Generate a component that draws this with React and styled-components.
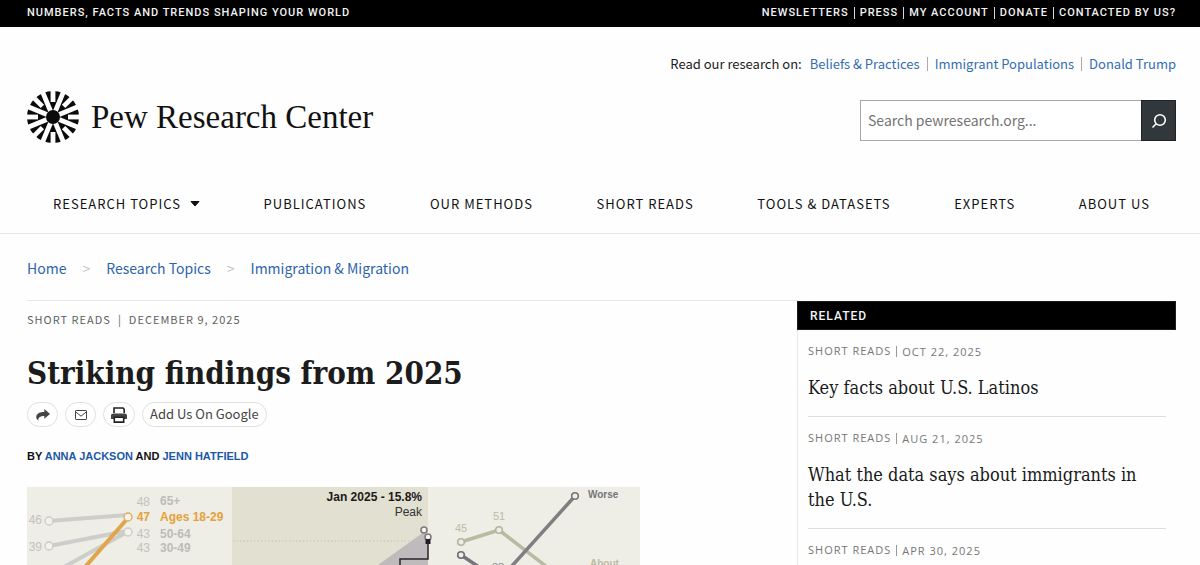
import React from "react";
import styled, { createGlobalStyle } from "styled-components";

const sans = `"Noto Sans CJK JP", "Noto Sans", sans-serif`;
const label = `Roboto, "Liberation Sans", sans-serif`;
const grotesk = `"Liberation Sans", sans-serif`;
const serif = `"Liberation Serif", serif`;
const slab = `"DejaVu Serif Condensed", "DejaVu Serif", serif`;

const GlobalStyle = createGlobalStyle`
  * {
    box-sizing: border-box;
  }

  body {
    margin: 0;
    background: #fefefe;
    color: #1a1a1a;
    font-family: ${sans};
    font-size: 14px;
    line-height: 20px;
  }

  a {
    color: inherit;
    text-decoration: none;
  }

  ul, ol {
    margin: 0;
    padding: 0;
    list-style: none;
  }
`;

const TopBar = styled.div`
  display: flex;
  justify-content: space-between;
  padding: 1px 24px 2px 27px;
  background: #000;
  color: #f2f2f2;
  font: 500 11px/24px ${label};
  letter-spacing: 1px;
  text-transform: uppercase;
`;

const TopLinks = styled.ul`
  display: flex;
  align-items: center;

  li + li {
    margin-left: 5px;
    padding-left: 5px;
    border-left: 1px solid #d8d8d8;
    line-height: 12px;
  }
`;

const Masthead = styled.header`
  border-bottom: 1px solid #e6e6e6;
`;

const MastheadRow = styled.div`
  display: flex;
  justify-content: space-between;
  align-items: flex-start;
  padding: 27px 24px 0 27px;
`;

const Brand = styled.a`
  display: flex;
  align-items: center;
  gap: 12px;
  margin-top: 37px;
  color: #111;
  font: 33px/52px ${serif};
`;

const MastheadSide = styled.div`
  display: flex;
  flex-direction: column;
  align-items: flex-end;
  gap: 26px;
`;

const ResearchOn = styled.div`
  display: flex;
  font-size: 13px;
`;

const ResearchLinks = styled.ul`
  display: flex;
  align-items: center;
  margin-left: 8px;
  color: #346db3;

  li + li {
    margin-left: 7px;
    padding-left: 7px;
    border-left: 1px solid #aaa;
    line-height: 14px;
  }
`;

const SearchForm = styled.form`
  display: flex;
  width: 316px;
  height: 41px;
`;

const SearchInput = styled.input`
  flex: 1;
  min-width: 0;
  padding: 0 7px 2px;
  border: 1px solid #a8a8a8;
  border-right: 0;
  border-radius: 0;
  background: #fff;
  font: 14px/20px ${sans};

  &::placeholder {
    color: #737373;
    opacity: 1;
  }
`;

const SearchButton = styled.button`
  display: flex;
  align-items: center;
  justify-content: center;
  width: 35px;
  padding: 0;
  border: 1px solid #1f2327;
  background: #32373c;
  color: #fff;
`;

const MainNav = styled.nav`
  padding: 51px 50px 19px 53px;

  ul {
    display: flex;
    justify-content: space-between;
  }

  a {
    display: flex;
    align-items: center;
    gap: 9px;
    color: #111;
    font-size: 13px;
    letter-spacing: 1px;
    text-transform: uppercase;
  }
`;

const Breadcrumb = styled.ol`
  display: flex;
  padding: 24px 27px 22px;
  color: #2d65ab;

  li + li::before {
    content: ">";
    margin: 0 16px;
    color: #c4c4c4;
  }
`;

const Page = styled.main`
  display: grid;
  grid-template-columns: minmax(0, 1fr) 379px;
  padding: 0 24px 0 27px;
`;

const Article = styled.article`
  border-top: 1px solid #e6e6e6;
`;

const Meta = styled.p`
  margin: 8px 0 0;
  color: #5f5f5f;
  font-size: 11px;
  letter-spacing: 1px;
  text-transform: uppercase;

  span {
    margin: 0 7px;
  }
`;

const Headline = styled.h1`
  margin: 22px 0 7px;
  color: #1c1c1c;
  font: bold 31px/44px ${slab};
`;

const ShareRow = styled.div`
  display: flex;
  gap: 7px;
`;

const ShareButton = styled.button`
  display: flex;
  align-items: center;
  justify-content: center;
  min-width: 31px;
  height: 25px;
  padding: 0 7px;
  border: 1px solid #e0e0e0;
  border-radius: 13px;
  background: #fff;
  color: #444;
  font: 13px/20px ${sans};

  span {
    padding-bottom: 2px;
  }
`;

const Byline = styled.p`
  margin: 19px 0 21px;
  color: #111;
  font: bold 11px/20px ${grotesk};
  text-transform: uppercase;

  a {
    color: #1d58a5;
  }
`;

const Figure = styled.figure`
  max-width: 613px;
  margin: 0;

  svg {
    display: block;
    width: 100%;
  }
`;

const Sidebar = styled.aside`
  border-left: 1px solid #e6e6e6;
`;

const SidebarTitle = styled.h2`
  margin: 1px 0 0 -1px;
  padding: 1px 12px 0;
  border: 1px solid #1c1c1c;
  background: #000;
  color: #f5f5f5;
  font: 500 12px/26px ${label};
  letter-spacing: 1px;
  text-transform: uppercase;
`;

const RelatedList = styled.ul`
  padding: 0 10px;
`;

const RelatedItem = styled.li`
  padding: 13px 0 8px;

  & + & {
    margin-top: 8px;
    border-top: 1px solid #dedede;
  }
`;

const RelatedMeta = styled.div`
  display: flex;
  align-items: center;
  color: #777;
  font: 11px/16px "Open Sans", ${grotesk};
  letter-spacing: 1px;
  text-transform: uppercase;

  time {
    margin-left: 5px;
    padding-left: 5px;
    border-left: 1px solid #999;
    line-height: 11px;
  }
`;

const RelatedHeading = styled.h3`
  margin: 16px 0 0;
  color: #1a1a1a;
  font: 18px/25px ${slab};
`;

const topLinks = ["Newsletters", "Press", "My Account", "Donate", "Contacted by us?"];
const researchLinks = ["Beliefs & Practices", "Immigrant Populations", "Donald Trump"];
const navLinks = [
  "Publications",
  "Our Methods",
  "Short Reads",
  "Tools & Datasets",
  "Experts",
  "About Us",
];
const crumbs = ["Home", "Research Topics", "Immigration & Migration"];
const related = [
  { date: "Oct 22, 2025", title: "Key facts about U.S. Latinos" },
  { date: "Aug 21, 2025", title: "What the data says about immigrants in the U.S." },
  { date: "Apr 30, 2025" },
];

const spokes = Array.from({ length: 16 }, (_, i) => i);

function Sunburst() {
  return (
    <svg width="52" height="52" viewBox="-26 -26 52 52" aria-hidden="true">
      <circle r="26" fill="#0b0b0b" />
      {spokes.map((i) => (
        <rect
          key={i}
          x="-2.4"
          y="-27"
          width="4.8"
          height={i % 2 ? 21 : 12}
          fill="#fefefe"
          transform={`rotate(${i * 22.5})`}
        />
      ))}
      <circle r="7" fill="#0b0b0b" />
    </svg>
  );
}

function SearchIcon() {
  return (
    <svg width="16" height="16" viewBox="0 0 16 16" fill="none" stroke="currentColor" strokeWidth="1.6">
      <circle cx="9" cy="7" r="5.3" />
      <path d="M5.2 10.8 1.5 14.5" />
    </svg>
  );
}

function ShareIcon() {
  return (
    <svg width="14" height="12" viewBox="0 0 14 12" fill="currentColor">
      <path d="M8.3 0 14 5 8.3 9.8V7C5.3 6.8 3.2 7.7 2.4 9.8c-.2.7 0 1.3.2 1.8C.8 10.6 0 8.9.3 7.2.9 4.3 4 2.9 8.3 2.9z" />
    </svg>
  );
}

function MailIcon() {
  return (
    <svg width="12" height="10" viewBox="0 0 12 10" fill="none" stroke="currentColor">
      <rect x=".5" y=".5" width="11" height="9" rx=".6" />
      <path d="M.8 2 6 6.2 11.2 2" />
    </svg>
  );
}

function PrintIcon() {
  return (
    <svg width="16" height="16" viewBox="0 0 16 16">
      <path d="M3 6V1h9l1.2 1.3V6" fill="none" stroke="#222" strokeWidth="1.6" />
      <path d="M2.3 6.5h11.4C15 6.5 16 7.4 16 8.6V12h-3.3v-1.8H3.3V12H0V8.6c0-1.200 1-2.100 2.300-2.100z" fill="#444" />
      <path d="M3.3 10.2h9.4v4.900H3.300z" fill="#fff" stroke="#222" strokeWidth="1.6" />
    </svg>
  );
}

const chartLabels = [
  { x: 15, y: 37, text: "46", fill: "#c3c2bd", anchor: "end" },
  { x: 15, y: 64, text: "39", fill: "#c3c2bd", anchor: "end" },
  { x: 123, y: 19, text: "48", fill: "#c3c2bd", anchor: "end" },
  { x: 123, y: 34, text: "47", fill: "#e6a03c", anchor: "end", bold: true },
  { x: 123, y: 51, text: "43", fill: "#c3c2bd", anchor: "end" },
  { x: 123, y: 65, text: "43", fill: "#c3c2bd", anchor: "end" },
  { x: 133, y: 18, text: "65+", fill: "#bdbcb8", bold: true },
  { x: 133, y: 34, text: "Ages 18-29", fill: "#e6a03c", bold: true },
  { x: 133, y: 51, text: "50-64", fill: "#bdbcb8", bold: true },
  { x: 133, y: 65, text: "30-49", fill: "#bdbcb8", bold: true },
  { x: 395, y: 14, text: "Jan 2025 - 15.8%", fill: "#1a1a1a", anchor: "end", bold: true },
  { x: 395, y: 29, text: "Peak", fill: "#333", anchor: "end" },
  { x: 428, y: 45, text: "45", fill: "#bcbba5", size: 11 },
  { x: 466, y: 33, text: "51", fill: "#bcbba5", size: 11 },
  { x: 465, y: 84, text: "38", fill: "#8a8990", size: 11 },
  { x: 561, y: 11, text: "Worse", fill: "#77757b", bold: true, size: 10 },
  { x: 563, y: 80, text: "About", fill: "#bcbba5", bold: true, size: 10 },
];

function Chart() {
  return (
    <svg viewBox="0 0 613 78" fontFamily={grotesk} role="img" aria-label="Charts from 2025 findings">
      <path fill="#eeeee6" d="M0 0h613v78H0z" />
      <path fill="#e2e0d1" d="M205 0h196v78H205z" />
      <g fill="none" stroke="#cdcdca" strokeWidth="4">
        <path d="M22 34 100 28M22 59l78-15M37 80l63-35" />
      </g>
      <path d="M58 80l43-49" stroke="#e0a54b" strokeWidth="4" />
      <g fill="#f3f2ec" stroke="#cbcac6" strokeWidth="1.3">
        <circle cx="22" cy="34" r="4" />
        <circle cx="22" cy="59" r="4" />
        <circle cx="101" cy="45" r="4" />
        <circle cx="101" cy="30" r="4" stroke="#dfab5f" />
      </g>

      <path fill="#bfbabb" d="m351 78 46-33 4 5v28z" />
      <path d="M206 54h192" stroke="#c3c1b4" strokeDasharray="1.5 2" />
      <path d="M401 54v18h-28v8" fill="none" stroke="#26242a" strokeWidth="1.5" />
      <g fill="#f5f4ee" stroke="#7d7a80" strokeWidth="1.6">
        <circle cx="397" cy="43" r="3" />
        <circle cx="401" cy="50" r="3" />
      </g>
      <path fill="#222026" d="M398.5 52h5v5h-5z" />

      <path d="m434 55 38-12 48 37" fill="none" stroke="#bab9a1" strokeWidth="3.5" />
      <path d="M548 9 484 80" stroke="#807e83" strokeWidth="3.5" />
      <path d="m434 68 18 12" stroke="#77747d" strokeWidth="3.5" />
      <g fill="#eeeee6" strokeWidth="1.6">
        <circle cx="434" cy="55" r="3.3" stroke="#b5b49f" />
        <circle cx="472" cy="43" r="3.3" stroke="#b5b49f" />
        <circle cx="434" cy="68" r="3.3" stroke="#6f6d76" />
        <circle cx="548" cy="9" r="3.3" stroke="#77757b" />
      </g>

      {chartLabels.map(({ x, y, text, fill, anchor, bold, size }) => (
        <text
          key={`${x}-${y}`}
          x={x}
          y={y}
          fill={fill}
          textAnchor={anchor}
          fontSize={size || 12}
          fontWeight={bold ? 700 : 400}
        >
          {text}
        </text>
      ))}
    </svg>
  );
}

export default function App() {
  return (
    <>
      <GlobalStyle />
      <TopBar>
        <span>Numbers, facts and trends shaping your world</span>
        <TopLinks>
          {topLinks.map((text) => (
            <li key={text}>
              <a href="#">{text}</a>
            </li>
          ))}
        </TopLinks>
      </TopBar>

      <Masthead>
        <MastheadRow>
          <Brand href="#">
            <Sunburst />
            Pew Research Center
          </Brand>
          <MastheadSide>
            <ResearchOn>
              Read our research on:
              <ResearchLinks>
                {researchLinks.map((text) => (
                  <li key={text}>
                    <a href="#">{text}</a>
                  </li>
                ))}
              </ResearchLinks>
            </ResearchOn>
            <SearchForm role="search">
              <SearchInput type="search" aria-label="Search" placeholder="Search pewresearch.org..." />
              <SearchButton type="submit" aria-label="Submit search">
                <SearchIcon />
              </SearchButton>
            </SearchForm>
          </MastheadSide>
        </MastheadRow>
        <MainNav>
          <ul>
            <li>
              <a href="#">
                Research Topics
                <svg width="10" height="6" viewBox="0 0 10 6" aria-hidden="true">
                  <path d="M1 .5h8L5 5z" fill="currentColor" stroke="currentColor" strokeLinejoin="round" />
                </svg>
              </a>
            </li>
            {navLinks.map((text) => (
              <li key={text}>
                <a href="#">{text}</a>
              </li>
            ))}
          </ul>
        </MainNav>
      </Masthead>

      <nav aria-label="Breadcrumb">
        <Breadcrumb>
          {crumbs.map((text) => (
            <li key={text}>
              <a href="#">{text}</a>
            </li>
          ))}
        </Breadcrumb>
      </nav>

      <Page>
        <Article>
          <Meta>
            Short Reads<span>|</span>December 9, 2025
          </Meta>
          <Headline>Striking findings from 2025</Headline>
          <ShareRow>
            <ShareButton aria-label="Share">
              <ShareIcon />
            </ShareButton>
            <ShareButton aria-label="Email">
              <MailIcon />
            </ShareButton>
            <ShareButton aria-label="Print">
              <PrintIcon />
            </ShareButton>
            <ShareButton>
              <span>Add Us On Google</span>
            </ShareButton>
          </ShareRow>
          <Byline>
            By <a href="#">Anna Jackson</a> and <a href="#">Jenn Hatfield</a>
          </Byline>
          <Figure>
            <Chart />
          </Figure>
        </Article>

        <Sidebar>
          <SidebarTitle>Related</SidebarTitle>
          <RelatedList>
            {related.map(({ date, title }) => (
              <RelatedItem key={date}>
                <RelatedMeta>
                  Short Reads
                  <time>{date}</time>
                </RelatedMeta>
                {title && (
                  <RelatedHeading>
                    <a href="#">{title}</a>
                  </RelatedHeading>
                )}
              </RelatedItem>
            ))}
          </RelatedList>
        </Sidebar>
      </Page>
    </>
  );
}
